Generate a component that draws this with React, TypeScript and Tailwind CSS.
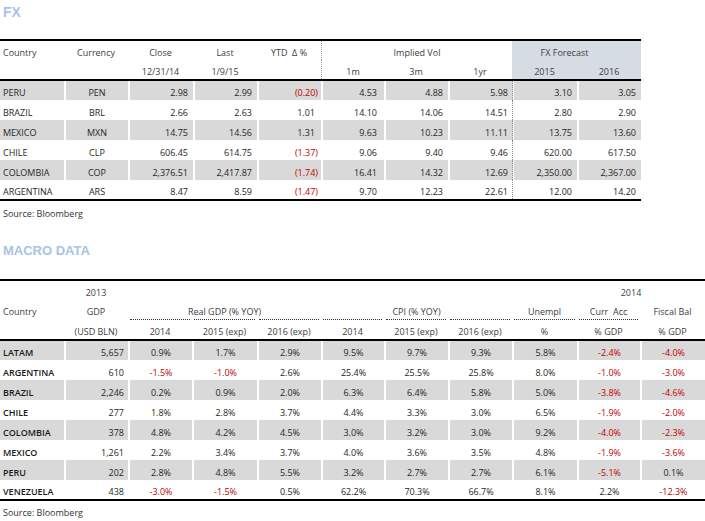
import React from "react";

const RED = "text-[#c00000]";

const fxCols = "grid grid-cols-[64px_64px_65px_64px_64px_63px_64px_64px_65px_64px]";
const mCols = "grid grid-cols-[64px_64px_64px_65px_64px_63px_64px_64px_65px_63px_65px]";

type FxRow = string[];
const fxRows: FxRow[] = [
  ["PERU", "PEN", "2.98", "2.99", "(0.20)", "4.53", "4.88", "5.98", "3.10", "3.05"],
  ["BRAZIL", "BRL", "2.66", "2.63", "1.01", "14.10", "14.06", "14.51", "2.80", "2.90"],
  ["MEXICO", "MXN", "14.75", "14.56", "1.31", "9.63", "10.23", "11.11", "13.75", "13.60"],
  ["CHILE", "CLP", "606.45", "614.75", "(1.37)", "9.06", "9.40", "9.46", "620.00", "617.50"],
  ["COLOMBIA", "COP", "2,376.51", "2,417.87", "(1.74)", "16.41", "14.32", "12.69", "2,350.00", "2,367.00"],
  ["ARGENTINA", "ARS", "8.47", "8.59", "(1.47)", "9.70", "12.23", "22.61", "12.00", "14.20"],
];
const fxHeights = ["h-[19px]", "h-[20px]", "h-[20px]", "h-[20px]", "h-[20px]", "h-[19px]"];
const fxPad = ["", "", "pr-[5px]", "pr-[5px]", "", "pr-[7px]", "pr-[5px]", "pr-[4px]", "pr-[5px]", "pr-[5px]"];

const mRows: string[][] = [
  ["LATAM", "5,657", "0.9%", "1.7%", "2.9%", "9.5%", "9.7%", "9.3%", "5.8%", "-2.4%", "-4.0%"],
  ["ARGENTINA", "610", "-1.5%", "-1.0%", "2.6%", "25.4%", "25.5%", "25.8%", "8.0%", "-1.0%", "-3.0%"],
  ["BRAZIL", "2,246", "0.2%", "0.9%", "2.0%", "6.3%", "6.4%", "5.8%", "5.0%", "-3.8%", "-4.6%"],
  ["CHILE", "277", "1.8%", "2.8%", "3.7%", "4.4%", "3.3%", "3.0%", "6.5%", "-1.9%", "-2.0%"],
  ["COLOMBIA", "378", "4.8%", "4.2%", "4.5%", "3.0%", "3.2%", "3.0%", "9.2%", "-4.0%", "-2.3%"],
  ["MEXICO", "1,261", "2.2%", "3.4%", "3.7%", "4.0%", "3.6%", "3.5%", "4.8%", "-1.9%", "-3.6%"],
  ["PERU", "202", "2.8%", "4.8%", "5.5%", "3.2%", "2.7%", "2.7%", "6.1%", "-5.1%", "0.1%"],
  ["VENEZUELA", "438", "-3.0%", "-1.5%", "0.5%", "62.2%", "70.3%", "66.7%", "8.1%", "2.2%", "-12.3%"],
];
const mHeights = ["h-[19px]", "h-[20px]", "h-[20px]", "h-[20px]", "h-[20px]", "h-[20px]", "h-[20px]", "h-[19px]"];

function Cell({ children, className = "" }: { children?: React.ReactNode; className?: string }) {
  return <div className={`flex items-end pb-[1px] leading-[12px] whitespace-pre ${className}`}>{children}</div>;
}

function FxTable() {
  return (
    <div className="w-[641px]">
      <div className="border-t-2 border-black" />
      <div className={`${fxCols} h-[19px] text-[#404040]`}>
        <Cell className="pl-[3px]">Country</Cell>
        <Cell className="justify-center">Currency</Cell>
        <Cell className="justify-center">Close</Cell>
        <Cell className="justify-center">Last</Cell>
        <Cell className="justify-center">{"YTD  Δ %"}</Cell>
        <Cell className="col-span-3 justify-center border-l border-dotted border-[#9a9a9a]">Implied Vol</Cell>
        <Cell className="col-span-2 justify-center pr-[24px] bg-[#d6dce4]">FX Forecast</Cell>
      </div>
      <div className={`${fxCols} h-[19px] text-[#404040]`}>
        <Cell />
        <Cell />
        <Cell className="justify-center">12/31/14</Cell>
        <Cell className="justify-center">1/9/15</Cell>
        <Cell />
        <Cell className="justify-center border-l border-dotted border-[#9a9a9a]">1m</Cell>
        <Cell className="justify-center">3m</Cell>
        <Cell className="justify-center">1yr</Cell>
        <Cell className="justify-center bg-[#d6dce4]">2015</Cell>
        <Cell className="justify-center bg-[#d6dce4]">2016</Cell>
      </div>
      <div className="border-t-2 border-black" />
      {fxRows.map((r, i) => (
        <div key={i} className={`${fxCols} ${fxHeights[i]} ${i % 2 === 0 ? "bg-[#d9d9d9]" : ""} text-[#262626]`}>
          {r.map((v, j) => {
            const neg = v.startsWith("(");
            let cls = "";
            if (j === 0) cls = "pl-[3px]";
            else if (j === 1) cls = "justify-center border-l-2 border-white";
            else if (j === 4) cls = `justify-end border-l-2 border-white ${neg ? `pr-[3px] ${RED}` : "pr-[6px]"}`;
            else if (j === 8) cls = `justify-end border-l border-dotted border-[#8c8c8c] shadow-[inset_1px_0_0_#ffffff] ${fxPad[j]}`;
            else cls = `justify-end border-l-2 border-white ${fxPad[j]}`;
            return (
              <Cell key={j} className={cls}>
                {v}
              </Cell>
            );
          })}
        </div>
      ))}
      <div className="border-t-2 border-black" />
    </div>
  );
}

function MacroTable() {
  return (
    <div className="w-[705px]">
      <div className="border-t-2 border-black" />
      <div className={`${mCols} h-[19px] text-[#404040]`}>
        <Cell />
        <Cell className="justify-center">2013</Cell>
        <Cell />
        <Cell />
        <Cell />
        <Cell />
        <Cell />
        <Cell />
        <Cell className="col-span-3 justify-center pl-[45px]">2014</Cell>
      </div>
      <div className={`${mCols} h-[19px] text-[#404040]`}>
        <Cell className="pl-[3px]">Country</Cell>
        <Cell className="justify-center">GDP</Cell>
        <Cell className="col-span-3 justify-center">Real GDP (% YOY)</Cell>
        <Cell className="col-span-3 justify-center">CPI (% YOY)</Cell>
        <Cell className="justify-center">Unempl</Cell>
        <Cell className="justify-center">{"Curr  Acc"}</Cell>
        <Cell className="justify-center">Fiscal Bal</Cell>
      </div>
      <div className={`${mCols} h-[1px]`}>
        <div />
        <div />
        {[0, 1, 2, 3, 4, 5, 6, 7].map((k) => (
          <div key={k} className="mx-[2px] border-t border-dotted border-[#333]" />
        ))}
        <div />
      </div>
      <div className={`${mCols} h-[19px] text-[#404040]`}>
        <Cell />
        <Cell className="justify-center">(USD BLN)</Cell>
        <Cell className="justify-center">2014</Cell>
        <Cell className="justify-center">2015 (exp)</Cell>
        <Cell className="justify-center">2016 (exp)</Cell>
        <Cell className="justify-center">2014</Cell>
        <Cell className="justify-center">2015 (exp)</Cell>
        <Cell className="justify-center">2016 (exp)</Cell>
        <Cell className="justify-center">%</Cell>
        <Cell className="justify-center">% GDP</Cell>
        <Cell className="justify-center">% GDP</Cell>
      </div>
      <div className="border-t-2 border-black" />
      {mRows.map((r, i) => (
        <div key={i} className={`${mCols} ${mHeights[i]} ${i % 2 === 0 ? "bg-[#d9d9d9]" : ""} text-[#262626]`}>
          {r.map((v, j) => {
            const neg = v.startsWith("-");
            let cls = "";
            if (j === 0) cls = "pl-[3px] font-semibold text-[#1a1a1a]";
            else if (j === 1) cls = "justify-end pr-[4px] border-l-2 border-white";
            else cls = `justify-center border-l-2 border-white ${neg ? RED : ""}`;
            return (
              <Cell key={j} className={cls}>
                {v}
              </Cell>
            );
          })}
        </div>
      ))}
      <div className="border-t-2 border-black" />
    </div>
  );
}

export default function App() {
  return (
    <div className="w-[705px] h-[521px] bg-white overflow-hidden text-[9px] font-['Open_Sans',sans-serif]">
      <div className="h-[39px] pl-[3px] pt-[4px]">
        <div className="font-['Liberation_Sans',sans-serif] font-bold text-[14px] leading-[16px] text-[#a7c4e7]">FX</div>
      </div>
      <FxTable />
      <div className="h-[38px] pl-[3px] pt-[7px] text-[#333] leading-[12px]">Source: Bloomberg</div>
      <div className="h-[40px] pl-[3px] pt-[4px]">
        <div className="font-['Liberation_Sans',sans-serif] font-bold text-[13px] leading-[16px] text-[#a7c4e7]">MACRO DATA</div>
      </div>
      <MacroTable />
      <div className="pl-[3px] pt-[6px] text-[#333] leading-[12px]">Source: Bloomberg</div>
    </div>
  );
}
